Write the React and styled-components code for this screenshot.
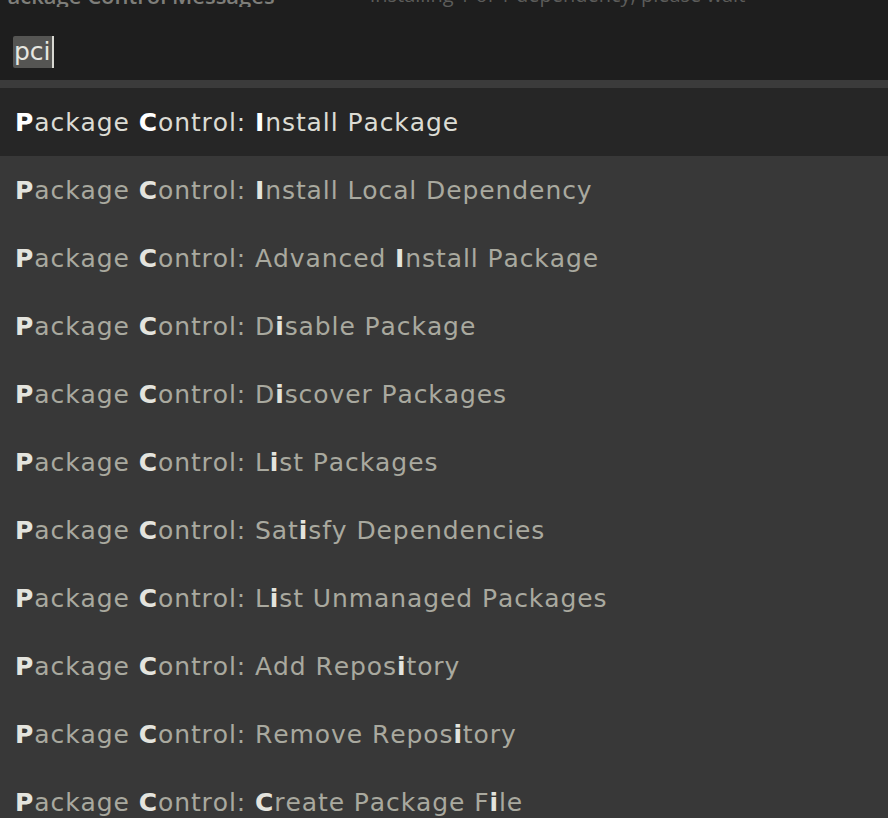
import styled, { createGlobalStyle } from "styled-components";

const GlobalStyle = createGlobalStyle`
  html, body {
    margin: 0;
    padding: 0;
    background: #383838;
  }
  body {
    font-family: "DejaVu Sans", "Noto Sans", sans-serif;
    overflow: hidden;
  }
`;

const items = [
  { label: "Package Control: Install Package", hits: [0, 8, 17] },
  { label: "Package Control: Install Local Dependency", hits: [0, 8, 17] },
  { label: "Package Control: Advanced Install Package", hits: [0, 8, 26] },
  { label: "Package Control: Disable Package", hits: [0, 8, 18] },
  { label: "Package Control: Discover Packages", hits: [0, 8, 18] },
  { label: "Package Control: List Packages", hits: [0, 8, 18] },
  { label: "Package Control: Satisfy Dependencies", hits: [0, 8, 20] },
  { label: "Package Control: List Unmanaged Packages", hits: [0, 8, 18] },
  { label: "Package Control: Add Repository", hits: [0, 8, 26] },
  { label: "Package Control: Remove Repository", hits: [0, 8, 29] },
  { label: "Package Control: Create Package File", hits: [0, 8, 17, 33] },
];

// splits the label so fuzzy-matched chars can be bolded
const Highlighted = ({ label, hits }) => {
  return label.split("").map((ch, i) =>
    hits.includes(i) ? <Match key={i}>{ch}</Match> : <span key={i}>{ch}</span>
  );
};

const App = () => {
  return (
    <>
      <GlobalStyle />
      <Panel>
        <TopStrip>
          <TabTitle>Package Control Messages</TabTitle>
          <TabInfo>Installing 1 of 1 dependency, please wait</TabInfo>
        </TopStrip>
        <InputArea>
          <Query>
            <Selected>pci</Selected>
            <Caret />
          </Query>
        </InputArea>
        <Divider />
        <List>
          {items.map((item, i) => (
            <Row key={item.label} $active={i === 0}>
              <Highlighted label={item.label} hits={item.hits} />
            </Row>
          ))}
        </List>
      </Panel>
    </>
  );
};

const Panel = styled.div`
  width: 888px;
  height: 818px;
  overflow: hidden;
  display: flex;
  flex-direction: column;
  background: #383838;
`;

const TopStrip = styled.div`
  height: 7px;
  flex-shrink: 0;
  overflow: hidden;
  background: #1e1e1e;
  display: flex;
  gap: 95px;
  font-family: "Open Sans", sans-serif;
  font-size: 22px;
  line-height: 22px;
  font-weight: 600;
  color: #7e7e7a;
`;

const TabTitle = styled.span`
  margin-top: -16px;
  margin-left: -6px;
  white-space: nowrap;
`;

const TabInfo = styled.span`
  margin-top: -16px;
  font-size: 20px;
  font-weight: 400;
  color: #5c5c5a;
  white-space: nowrap;
`;

const InputArea = styled.div`
  height: 73px;
  flex-shrink: 0;
  background: #1e1e1e;
  display: flex;
  align-items: flex-start;
  padding: 29px 0 0 13px;
  box-sizing: border-box;
`;

const Query = styled.div`
  display: flex;
  align-items: stretch;
  height: 32px;
`;

const Selected = styled.span`
  width: 39px;
  box-sizing: border-box;
  background: #555553;
  color: #e6e6e0;
  font-size: 25px;
  line-height: 31px;
  padding-left: 1px;
  border-radius: 2px 0 0 2px;
`;

const Caret = styled.span`
  width: 2px;
  background: #d8d8d2;
`;

const Divider = styled.div`
  height: 8px;
  flex-shrink: 0;
  background: #3b3b3b;
`;

const List = styled.div`
  display: flex;
  flex-direction: column;
`;

const Row = styled.div`
  height: 68px;
  flex-shrink: 0;
  display: flex;
  align-items: center;
  padding-left: 15px;
  font-size: 25px;
  letter-spacing: 0.9px;
  white-space: pre;
  background: ${(p) => (p.$active ? "#262626" : "#383838")};
  color: ${(p) => (p.$active ? "#dcdcd4" : "#a9a99f")};

  b {
    color: ${(p) => (p.$active ? "#ffffff" : "#e4e4de")};
  }
`;

const Match = styled.b`
  font-weight: 700;
`;

export default App;
